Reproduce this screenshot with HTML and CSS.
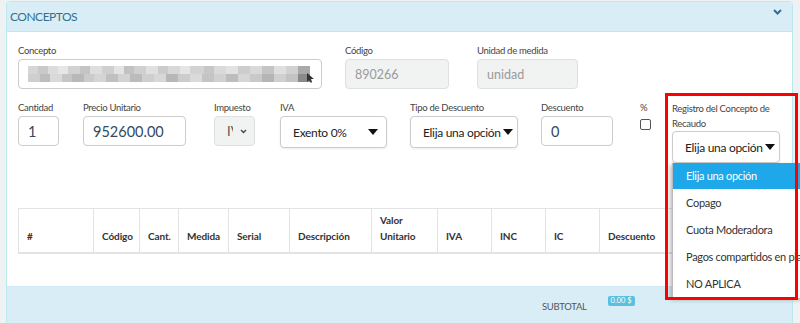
FILE: index.html
```html
<!DOCTYPE html>
<html>
<head>
    <title>Conceptos</title>
    <link rel="stylesheet" href="styles.css">
</head>
<body>
    <div class="panel">
        <div class="panel-heading">
            <span class="panel-title">CONCEPTOS</span>
            <svg class="toggle" width="9" height="6" viewBox="0 0 9 6"><polyline points="1,1 4.5,4.5 8,1" fill="none" stroke="#31708f" stroke-width="2"/></svg>
        </div>
        <div class="panel-body">
            <div class="row row-one">
                <div class="field">
                    <label>Concepto</label>
                    <div class="input concept">
                        <span class="blur"></span>
                        <svg class="pointer" width="7" height="10" viewBox="0 0 7 10"><polygon points="0,0 0,9 2,7 4,10 5,9 4,6 7,6" fill="#333"/></svg>
                    </div>
                </div>
                <div class="field">
                    <label>Código</label>
                    <div class="input disabled w-code">890266</div>
                </div>
                <div class="field">
                    <label>Unidad de medida</label>
                    <div class="input disabled w-unit">unidad</div>
                </div>
            </div>

            <div class="row row-two">
                <div class="field">
                    <label>Cantidad</label>
                    <div class="input w-qty">1</div>
                </div>
                <div class="field">
                    <label>Precio Unitario</label>
                    <div class="input w-price">952600.00</div>
                </div>
                <div class="field">
                    <label>Impuesto</label>
                    <div class="input disabled tax">
                        <span class="tax-text">IVA</span>
                        <svg width="7" height="5" viewBox="0 0 7 5"><polyline points="1,1 3.5,3.5 6,1" fill="none" stroke="#444" stroke-width="1.4"/></svg>
                    </div>
                </div>
                <div class="field">
                    <label>IVA</label>
                    <div class="select w-iva spread">Exento 0%<span class="caret"></span></div>
                </div>
                <div class="field">
                    <label>Tipo de Descuento</label>
                    <div class="select w-type">Elija una opción<span class="caret"></span></div>
                </div>
                <div class="field">
                    <label>Descuento</label>
                    <div class="input w-disc">0</div>
                </div>
                <div class="field">
                    <label>%</label>
                    <span class="check"></span>
                </div>
                <div class="field">
                    <label class="two-line">Registro del Concepto de<br>Recaudo</label>
                    <div class="select w-reg">Elija una opción<span class="caret"></span></div>
                </div>
            </div>

            <table class="items">
                <thead>
                    <tr>
                        <th class="c-num">#</th>
                        <th class="c-code">Código</th>
                        <th class="c-qty">Cant.</th>
                        <th class="c-unit">Medida</th>
                        <th class="c-serial">Serial</th>
                        <th class="c-desc">Descripción</th>
                        <th class="c-val">Valor<br>Unitario</th>
                        <th class="c-tax">IVA</th>
                        <th class="c-tax">INC</th>
                        <th class="c-tax">IC</th>
                        <th class="c-disc">Descuento</th>
                        <th class="c-total"></th>
                    </tr>
                </thead>
            </table>
        </div>
        <div class="panel-footer">
            <span class="subtotal">SUBTOTAL</span>
            <span class="badge">0.00 $</span>
        </div>
    </div>

    <ul class="menu">
        <li class="active">Elija una opción</li>
        <li>Copago</li>
        <li>Cuota Moderadora</li>
        <li>Pagos compartidos en planes voluntarios</li>
        <li>NO APLICA</li>
    </ul>
    <div class="highlight"></div>
</body>
</html>
```

FILE: styles.css
```css
body {
    margin: 0;
    width: 800px;
    height: 323px;
    overflow: hidden;
    background-color: #eef2f3;
    font-family: Lato, "Open Sans", sans-serif;
    color: #333;
    position: relative;
}
.panel {
    margin: 1px 0 0 6px;
    width: 787px;
    border: 1px solid #bce8f1;
    border-radius: 4px 4px 0 0;
    background-color: #fff;
    box-sizing: border-box;
}
.panel-heading {
    height: 29px;
    background-color: #d9edf7;
    border-bottom: 1px solid #bce8f1;
    display: flex;
    align-items: center;
    justify-content: space-between;
    padding: 0 10px 0 3px;
}
.panel-heading .toggle {
    margin-top: -10px;
}
.panel-title {
    font-size: 12px;
    letter-spacing: -0.5px;
    color: #31708f;
}
.panel-body {
    height: 254px;
    box-sizing: border-box;
    padding: 11px 11px 0 11px;
}
.row {
    display: grid;
}
.row-one {
    grid-template-columns: 327px 132px 101px;
}
.row-two {
    margin-top: 11px;
    grid-template-columns: 65px 131px 66px 130px 131px 99px 32px 108px;
}
label {
    display: block;
    font-size: 9.5px;
    letter-spacing: -0.3px;
    line-height: 16px;
    color: #444;
}
.two-line {
    white-space: nowrap;
    line-height: 15px;
    padding-top: 1px;
}
.input, .select {
    height: 30px;
    box-sizing: border-box;
    border: 1px solid #ccc;
    border-radius: 4px;
    font-size: 14.5px;
    display: flex;
    align-items: center;
    padding: 0 9px;
    color: #555;
    background-color: #fff;
    white-space: nowrap;
}
.disabled {
    background-color: #f1f3f3;
    border-color: #dde0e0;
    color: #9a9a9a;
    font-size: 12.5px;
}
.concept {
    width: 304px;
    position: relative;
}
.blur {
    display: block;
    width: 282px;
    height: 16px;
    background-image:
        linear-gradient(to right, #d6d6d6 0 10px, #c9c9c9 10px 20px, #dcdcdc 20px 30px, #e6e6e6 30px 40px, #d2d2d2 40px 52px, #c4c4c4 52px 62px, #dedede 62px 74px, #cfcfcf 74px 86px, #e4e4e4 86px 96px, #c2c2c2 96px 106px, #d0d0d0 106px 118px, #e0e0e0 118px 130px, #cbcbcb 130px 140px, #d8d8d8 140px 152px, #e5e5e5 152px 162px, #d3d3d3 162px 176px, #c7c7c7 176px 186px, #dadada 186px 198px, #e2e2e2 198px 210px, #cdcdcd 210px 222px, #d9d9d9 222px 234px, #c5c5c5 234px 246px, #dfdfdf 246px 258px, #d1d1d1 258px 270px, #a9a9a9 270px 282px),
        linear-gradient(to right, #cfcfcf 0 12px, #bdbdbd 12px 22px, #d9d9d9 22px 34px, #c6c6c6 34px 44px, #b9b9b9 44px 56px, #cbcbcb 56px 66px, #d5d5d5 66px 78px, #c0c0c0 78px 90px, #d3d3d3 90px 102px, #bbbbbb 102px 114px, #cfcfcf 114px 126px, #d8d8d8 126px 138px, #b7b7b7 138px 150px, #cccccc 150px 162px, #dadada 162px 174px, #c4c4c4 174px 186px, #d1d1d1 186px 198px, #bdbdbd 198px 210px, #d6d6d6 210px 222px, #c9c9c9 222px 234px, #b5b5b5 234px 246px, #d0d0d0 246px 258px, #c3c3c3 258px 270px, #8a8a8a 270px 282px);
    background-size: 100% 8px, 100% 8px;
    background-position: 0 0, 0 8px;
    background-repeat: no-repeat;
}
.pointer {
    position: absolute;
    left: 288px;
    top: 13px;
}
.w-code {
    width: 104px;
}
.w-unit {
    width: 101px;
}
.w-qty {
    width: 41px;
    color: #34495e;
}
.w-price {
    width: 103px;
    color: #34495e;
}
.tax {
    width: 41px;
    padding: 0 7px 0 12px;
    justify-content: space-between;
}
.tax-text {
    width: 6px;
    overflow: hidden;
    color: #555;
    font-size: 13px;
}
.select {
    height: 32px;
    color: #222;
    font-size: 12px;
    letter-spacing: -0.3px;
    padding: 0 8px 0 12px;
    box-shadow: 0 1px 2px rgba(0,0,0,0.08);
}
.spread {
    justify-content: space-between;
}
.w-iva {
    width: 107px;
}
.w-type {
    width: 108px;
}
.w-reg {
    width: 108px;
}
.w-disc {
    width: 72px;
    color: #34495e;
}
.caret {
    width: 0;
    height: 0;
    margin-left: 2px;
    border-left: 5px solid transparent;
    border-right: 5px solid transparent;
    border-top: 6px solid #111;
}
.check {
    display: block;
    width: 9px;
    height: 9px;
    margin-top: 3px;
    border: 1px solid #555;
    border-radius: 2px;
    background-color: #fff;
}
.items {
    margin-top: 45px;
    border-collapse: collapse;
    table-layout: fixed;
    width: 762px;
}
.items th {
    height: 44px;
    box-sizing: border-box;
    border: 1px solid #e3e3e3;
    border-bottom-width: 2px;
    text-align: left;
    vertical-align: bottom;
    padding: 0 8px 8px 8px;
    font-size: 10px;
    letter-spacing: -0.1px;
    line-height: 16px;
    font-weight: 700;
    color: #333;
}
.c-num { width: 75px; }
.c-code { width: 46px; }
.c-qty { width: 39px; }
.c-unit { width: 50px; }
.c-serial { width: 61px; }
.c-desc { width: 82px; }
.c-val { width: 66px; }
.c-tax { width: 54px; }
.c-disc { width: 80px; }
.panel-footer {
    height: 40px;
    background-color: #d9edf7;
    border-top: 1px solid #d0e9f3;
    display: flex;
    align-items: flex-start;
    padding-left: 535px;
}
.subtotal {
    margin-top: 14px;
    font-size: 9.5px;
    letter-spacing: -0.3px;
    color: #555;
}
.badge {
    margin: 9px 0 0 21px;
    background-color: #5bc0de;
    color: #fff;
    font-size: 7.5px;
    line-height: 10px;
    padding: 0 3px;
    border-radius: 2px;
}
.menu {
    position: absolute;
    left: 672px;
    top: 163px;
    width: 150px;
    margin: 0;
    padding: 0 0 1px 0;
    list-style: none;
    background-color: #fff;
    border-left: 1px solid #bbb;
    box-shadow: -2px 2px 4px rgba(0,0,0,0.25);
}
.menu li {
    height: 27px;
    line-height: 27px;
    padding-left: 13px;
    font-size: 11px;
    letter-spacing: -0.3px;
    color: #333;
    white-space: nowrap;
}
.menu .active {
    height: 26px;
    line-height: 26px;
    background-color: #1ea8ea;
    color: #fff;
}
.highlight {
    position: absolute;
    left: 665px;
    top: 93px;
    width: 127px;
    height: 201px;
    border: 3px solid #f00;
}
```
